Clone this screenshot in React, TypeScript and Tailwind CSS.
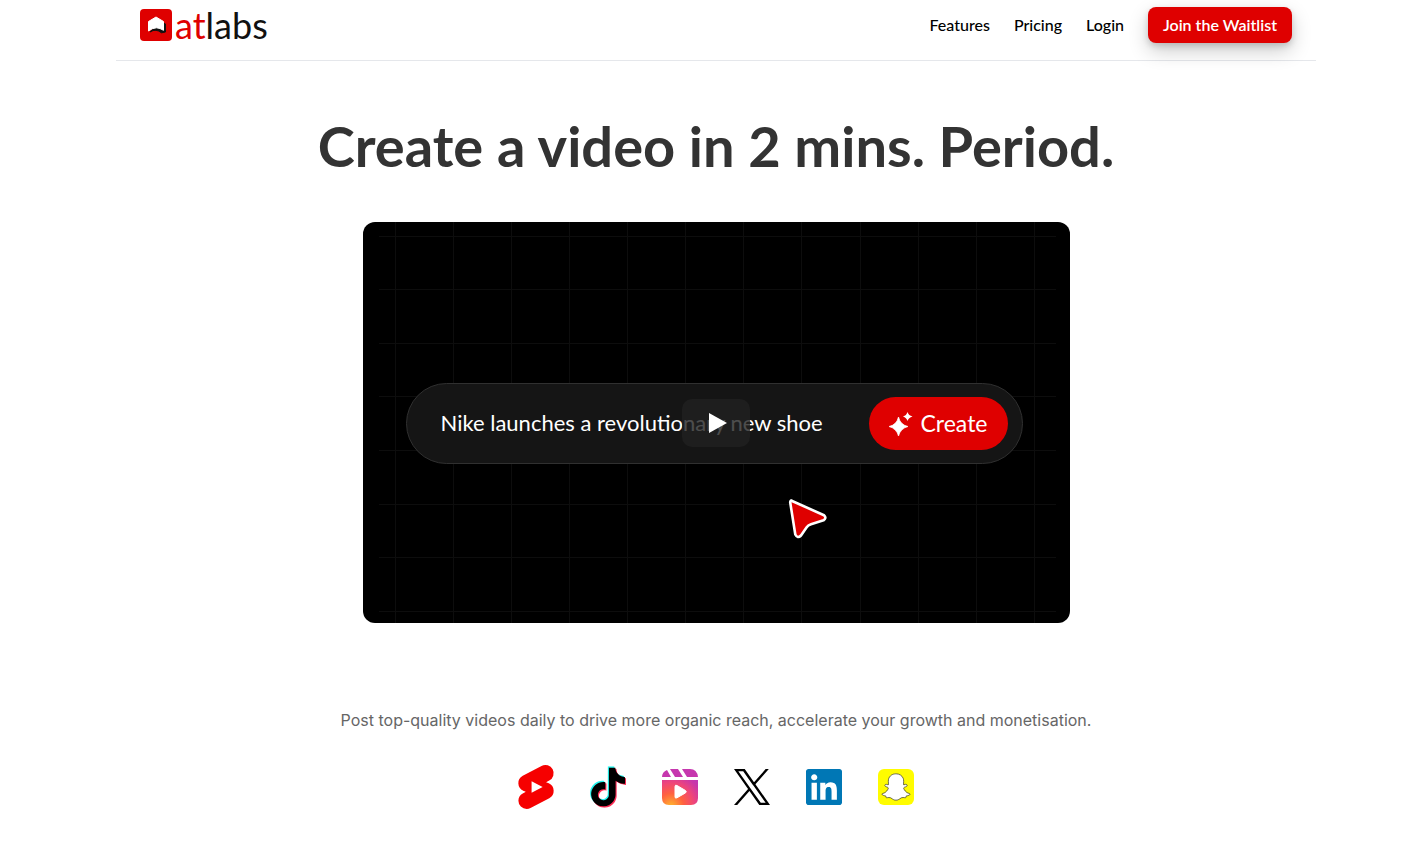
import React from 'react';
import { SiYoutubeshorts, SiTiktok } from 'react-icons/si';
import { FaLinkedin, FaSnapchatGhost } from 'react-icons/fa';

const navLinks = ['Features', 'Pricing', 'Login'];

const gridColumns = [32, 90, 148, 206, 264, 322, 380, 438, 497, 555, 613, 671];
const gridRows = [14, 67, 121, 174, 228, 282, 335, 389];

const Logo: React.FC = () => (
    <a href="#" className="flex items-center gap-[3px]" aria-label="atlabs">
        <svg viewBox="0 0 32 32" className="h-8 w-8">
            <rect width="32" height="32" rx="4" fill="#df0000" />
            <path d="M10 23Q13 21 16 21.300Q18.500 21.500 21.500 23.800L25.500 23V15L20 12Z" fill="#111" stroke="#111" strokeWidth="1" strokeLinejoin="round" />
            <path d="M16 8L23.500 12.500V21.300Q20 19 16.500 18.800Q12 19 8.500 22V12.500Z" fill="#fff" stroke="#fff" strokeWidth="1" strokeLinejoin="round" />
        </svg>
        <span className="text-4xl leading-8 text-[#111]">
            <span className="text-[#df0000]">at</span>labs
        </span>
    </a>
);

const Header: React.FC = () => (
    <header className="mx-auto flex h-[61px] max-w-[1200px] items-start justify-between border-b border-gray-200 px-6">
        <div className="pt-[9px]">
            <Logo />
        </div>
        <nav className="flex items-center gap-6 pt-[7px] text-base font-medium text-black">
            {navLinks.map((label) => (
                <a key={label} href="#">{label}</a>
            ))}
            <button className="h-9 w-36 rounded-lg bg-[#df0000] font-semibold text-white shadow-[0_8px_20px_rgba(0,0,0,0.2),0_3px_6px_rgba(0,0,0,0.15)]">
                Join the Waitlist
            </button>
        </nav>
    </header>
);

const Grid: React.FC = () => (
    <svg viewBox="0 0 707 401" className="absolute inset-0 h-full w-full" aria-hidden="true">
        {gridColumns.map((x) => (
            <path key={x} d={`M${x + 0.5} 0V401`} stroke="#0d0d0d" />
        ))}
        {gridRows.map((y) => (
            <path key={y} d={`M16 ${y + 0.5}H693`} stroke="#0d0d0d" />
        ))}
    </svg>
);

const VideoPreview: React.FC = () => (
    <section className="relative mx-auto flex aspect-[707/401] max-w-[707px] items-center overflow-hidden rounded-xl bg-black pt-0.5 pr-[47px] pl-[43px]">
        <Grid />
        <div className="relative flex h-[81px] w-full items-center rounded-full border border-[#303030] bg-[#151515] pr-3.5 pl-[34px]">
            <input
                readOnly
                aria-label="Video prompt"
                value="Nike launches a revolutionary new shoe"
                className="min-w-0 flex-1 bg-transparent pb-0.5 text-[22px] text-white outline-none"
            />
            <button className="flex h-[53px] w-[139px] items-center justify-center gap-2 rounded-full bg-[#df0000] text-[23px] text-white">
                <svg viewBox="0 0 24 26" className="h-[26px] w-6" fill="currentColor">
                    <path d="M9.500 6Q11.500 14 19 15.500Q11.500 17.500 9.500 25Q7.500 17.500 0 15.500Q7.500 14 9.500 6Z" stroke="currentColor" strokeWidth="0.700" />
                    <path d="M18.500 1Q19.500 4.500 23.500 5.500Q19.500 6.500 18.500 10Q17.500 6.500 14 5.500Q17.500 4.500 18.500 1Z" />
                </svg>
                Create
            </button>
        </div>
        <button aria-label="Play video" className="absolute top-1/2 left-1/2 flex h-12 w-[68px] -translate-x-1/2 -translate-y-1/2 items-center justify-center rounded-[10px] bg-[#212121]/80 pl-1">
            <svg viewBox="0 0 18 20" className="h-5 w-[18px]">
                <path d="M0 0L18 10L0 20Z" fill="#fff" />
            </svg>
        </button>
        <svg viewBox="0 0 40 42" className="absolute top-[69%] left-[60%] h-[42px] w-10" aria-hidden="true">
            <path
                d="M4 1.500L37 16.200Q40 19 36.500 21.300L24 25.300Q21 26.300 19.500 28.500L14 36.500Q10.500 40 8.300 35.500L3.300 4Q2.800 1 5.500 2Z"
                fill="#df0000"
                stroke="#fff"
                strokeWidth="2.600"
                strokeLinejoin="round"
            />
        </svg>
    </section>
);

const TiktokIcon: React.FC = () => (
    <svg viewBox="0 0 36 42" className="h-[42px] w-9">
        <SiTiktok size={39} x="-2.500" y="0.300" color="#25f4ee" />
        <SiTiktok size={39} x="-0.300" y="2.700" color="#fe2c55" />
        <SiTiktok size={39} x="-1.400" y="1.500" color="#000" />
    </svg>
);

const ReelsIcon: React.FC = () => (
    <svg viewBox="0 0 36 36" className="h-9 w-9">
        <defs>
            <radialGradient id="reels" gradientUnits="userSpaceOnUse" cx="9" cy="37" r="36">
                <stop offset="0" stopColor="#ffb52e" />
                <stop offset="0.350" stopColor="#ff613f" />
                <stop offset="0.650" stopColor="#ee457a" />
                <stop offset="0.900" stopColor="#c936a8" />
                <stop offset="1" stopColor="#c037b2" />
            </radialGradient>
        </defs>
        <path d="M0 11H36V29Q36 36 29 36H7Q0 36 0 29Z" fill="url(#reels)" />
        <path d="M0 8Q0 3 5 1L9 8ZM8 0H16L21 8H13ZM20 0H28Q35 0 36 8H25Z" fill="#c637ae" />
        <path d="M13 17.500Q13 15.500 15 16.500L23.500 21.500Q25 22.700 23.500 23.900L15 28.800Q13 29.800 13 27.800Z" fill="#fff" stroke="#fff" />
    </svg>
);

const XIcon: React.FC = () => (
    <svg viewBox="0 0 1200 1227" className="h-9 w-9" fill="#000" preserveAspectRatio="none">
        <path d="M714.163 519.284L1160.890 0H1055.030L667.137 450.887L357.328 0H0L468.492 681.821L0 1226.370H105.866L515.491 750.218L842.672 1226.370H1200L714.137 519.284H714.163ZM569.165 687.828L521.697 619.934L144.011 79.694H306.615L611.412 515.685L658.880 583.579L1055.080 1150.300H892.476L569.165 687.854V687.828Z" />
    </svg>
);

const Socials: React.FC = () => (
    <ul className="mt-8 flex items-center justify-center gap-9">
        <li>
            <a href="#" aria-label="YouTube Shorts">
                <SiYoutubeshorts className="h-[46px] w-9 overflow-visible text-[#f60000]" viewBox="2.200 0 19.600 24" />
            </a>
        </li>
        <li><a href="#" aria-label="TikTok"><TiktokIcon /></a></li>
        <li><a href="#" aria-label="Instagram Reels"><ReelsIcon /></a></li>
        <li><a href="#" aria-label="X"><XIcon /></a></li>
        <li>
            <a href="#" aria-label="LinkedIn">
                <FaLinkedin className="h-9 w-9 text-[#0077b5]" viewBox="0 32 448 448" />
            </a>
        </li>
        <li>
            <a href="#" aria-label="Snapchat" className="flex h-9 w-9 items-center justify-center rounded-md bg-[#fffc00]">
                <FaSnapchatGhost className="h-7 w-7 overflow-visible text-white" stroke="#222" strokeWidth="12" />
            </a>
        </li>
    </ul>
);

const App: React.FC = () => {
    return (
        <div className="min-h-screen bg-white pl-[31px] font-['Lato','Liberation_Sans',sans-serif]">
            <Header />
            <main className="text-center">
                <h1 className="pt-12 pb-10 text-[56px] leading-[73px] font-bold text-[#333]">
                    Create a video in 2 mins. Period.
                </h1>
                <VideoPreview />
                <p className="mt-[85px] font-['Inter',sans-serif] text-base text-[#666]">
                    Post top-quality videos daily to drive more organic reach, accelerate your growth and monetisation.
                </p>
                <Socials />
            </main>
        </div>
    );
};

export default App;
